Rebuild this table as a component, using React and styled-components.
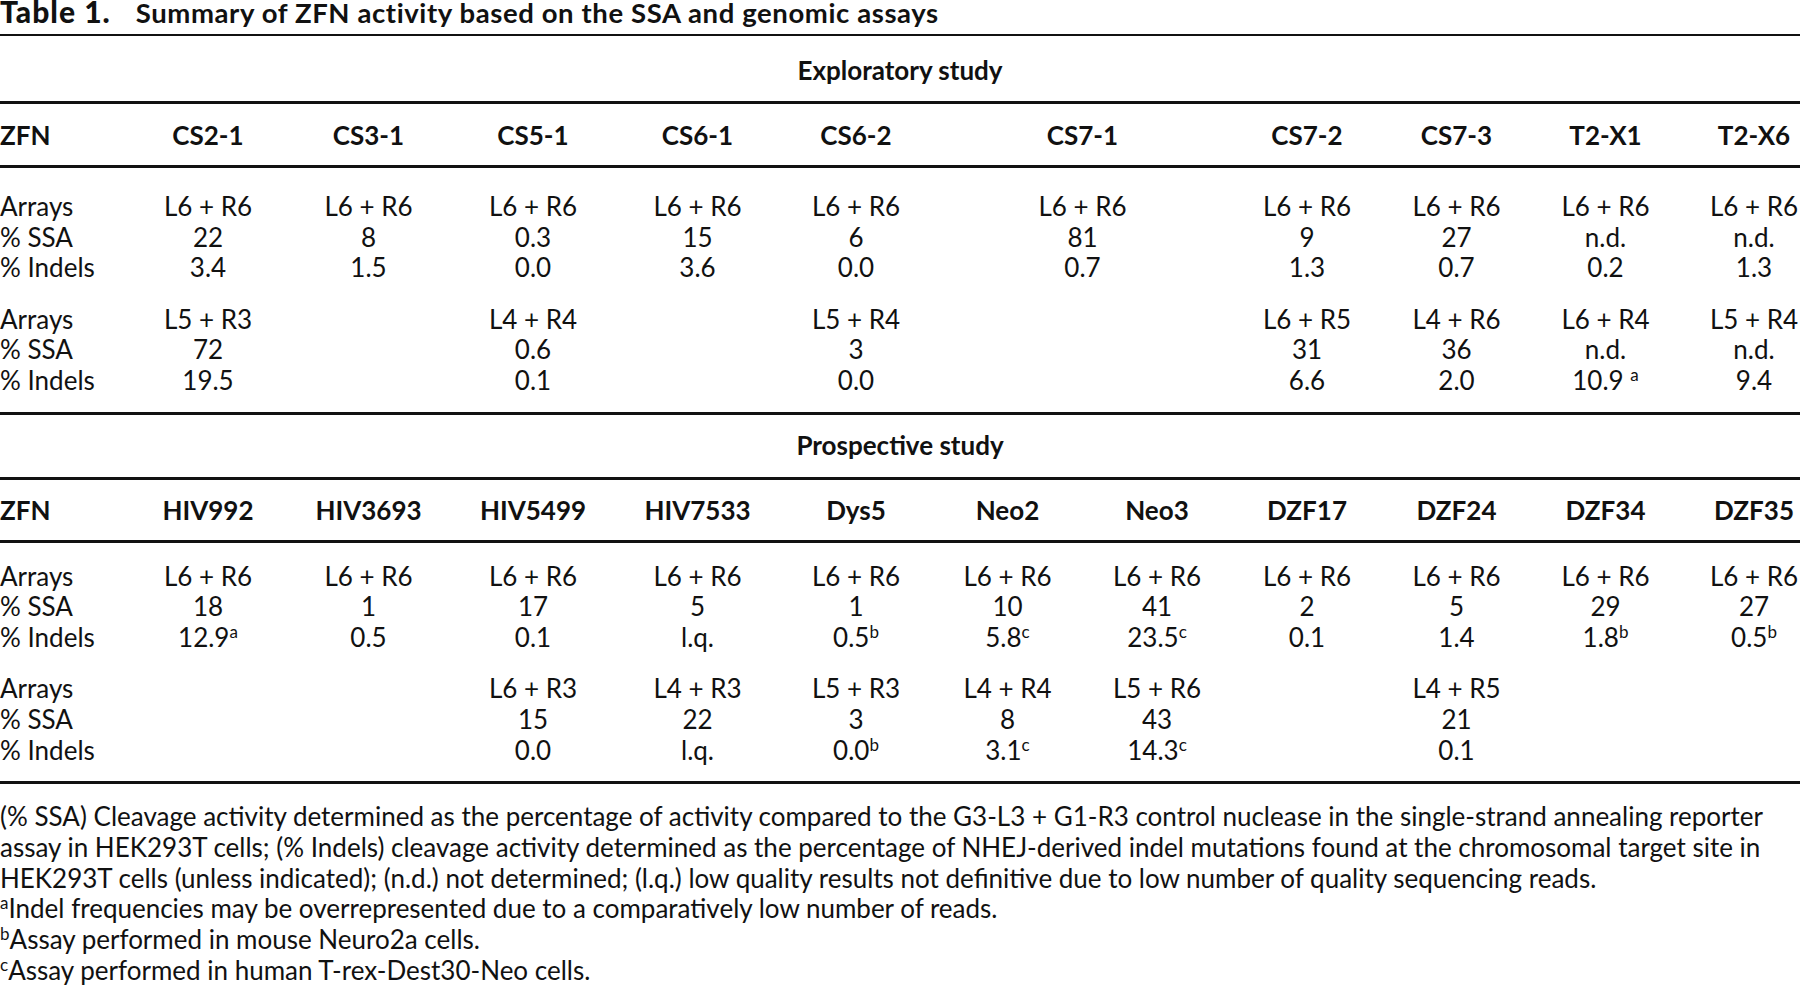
import React from "react";
import styled, { createGlobalStyle } from "styled-components";

const GlobalStyle = createGlobalStyle`
  html, body {
    margin: 0;
    padding: 0;
    background: #ffffff;
    overflow: hidden;
  }
`;

const INK = "#111111";
const COLS =
  "129px 158px 163px 166px 163px 154px 149px 150px 150px 149px 149px 148px";

const Page = styled.div`
  width: 1800px;
  height: 988px;
  overflow: hidden;
  font-family: Lato, "Open Sans", sans-serif;
  font-size: 26px;
  color: ${INK};
`;

const Caption = styled.div`
  height: 22px;
  font-size: 27.5px;
  line-height: 22px;
  letter-spacing: 0.6px;
  padding: 2px 0 10px;
  border-bottom: 2px solid ${INK};
  white-space: nowrap;
  font-weight: 700;
`;

const CaptionLabel = styled.span`
  font-size: 30px;
  line-height: 0;
  font-weight: 900;
  letter-spacing: 1px;
  margin-right: 25px;
`;

const Banner = styled.div`
  width: 1800px;
  text-align: center;
  font-weight: 700;
  line-height: 30.5px;
  padding: ${(p) => p.$top}px 0 16px;
  border-bottom: 3px solid ${INK};
`;

const Grid = styled.div`
  display: grid;
  grid-template-columns: ${COLS};
  width: max-content;
`;

const HeadRow = styled(Grid)`
  font-weight: 700;
  line-height: 30px;
  padding: 15.5px 0 15px;
  border-bottom: 3px solid ${INK};
  width: 1800px;
`;

const Block = styled(Grid)`
  line-height: 30.6px;
  padding-top: ${(p) => p.$top}px;
`;

const Section = styled.div`
  width: 1800px;
  padding-bottom: 16px;
  border-bottom: 3px solid ${INK};
`;

const Cell = styled.div`
  text-align: ${(p) => (p.$label ? "left" : "center")};
  grid-column: span ${(p) => p.$span || 1};
  white-space: nowrap;
`;

const Sup = styled.sup`
  font-size: 17px;
  line-height: 0;
  vertical-align: 9px;
`;

const Notes = styled.div`
  padding-top: 17px;
  line-height: 30.7px;
  font-size: 26px;
`;

const NoteLine = styled.div`
  white-space: nowrap;
`;

// value strings: "12.9^a" -> 12.9 with superscript a
const Value = ({ v }) => {
  if (!v) return null;
  const [main, mark] = v.split("^");
  return (
    <>
      {main}
      {mark && <Sup>{mark}</Sup>}
    </>
  );
};

const exploratory = {
  bannerTop: 18.5,
  head: ["CS2-1", "CS3-1", "CS5-1", "CS6-1", "CS6-2", "CS7-1", "CS7-2", "CS7-3", "T2-X1", "T2-X6"],
  spans: [1, 1, 1, 1, 1, 2, 1, 1, 1, 1],
  top: [23.5, 21],
  groups: [
    {
      Arrays: Array(10).fill("L6 + R6"),
      "% SSA": ["22", "8", "0.3", "15", "6", "81", "9", "27", "n.d.", "n.d."],
      "% Indels": ["3.4", "1.5", "0.0", "3.6", "0.0", "0.7", "1.3", "0.7", "0.2", "1.3"],
    },
    {
      Arrays: ["L5 + R3", "", "L4 + R4", "", "L5 + R4", "", "L6 + R5", "L4 + R6", "L6 + R4", "L5 + R4"],
      "% SSA": ["72", "", "0.6", "", "3", "", "31", "36", "n.d.", "n.d."],
      "% Indels": ["19.5", "", "0.1", "", "0.0", "", "6.6", "2.0", "10.9 ^a", "9.4"],
    },
  ],
};

const prospective = {
  bannerTop: 15.5,
  head: ["HIV992", "HIV3693", "HIV5499", "HIV7533", "Dys5", "Neo2", "Neo3", "DZF17", "DZF24", "DZF34", "DZF35"],
  spans: Array(11).fill(1),
  top: [17.5, 21],
  groups: [
    {
      Arrays: Array(11).fill("L6 + R6"),
      "% SSA": ["18", "1", "17", "5", "1", "10", "41", "2", "5", "29", "27"],
      "% Indels": ["12.9^a", "0.5", "0.1", "l.q.", "0.5^b", "5.8^c", "23.5^c", "0.1", "1.4", "1.8^b", "0.5^b"],
    },
    {
      Arrays: ["", "", "L6 + R3", "L4 + R3", "L5 + R3", "L4 + R4", "L5 + R6", "", "L4 + R5", "", ""],
      "% SSA": ["", "", "15", "22", "3", "8", "43", "", "21", "", ""],
      "% Indels": ["", "", "0.0", "l.q.", "0.0^b", "3.1^c", "14.3^c", "", "0.1", "", ""],
    },
  ],
};

const Study = ({ title, data }) => (
  <>
    <Banner $top={data.bannerTop}>{title}</Banner>
    <HeadRow>
      <Cell $label>ZFN</Cell>
      {data.head.map((h, i) => (
        <Cell key={h} $span={data.spans[i]}>
          {h}
        </Cell>
      ))}
    </HeadRow>
    <Section>
      {data.groups.map((g, gi) => (
        <Block key={gi} $top={data.top[gi]}>
          {Object.entries(g).map(([label, vals]) => (
            <React.Fragment key={label}>
              <Cell $label>{label}</Cell>
              {vals.map((v, i) => (
                <Cell key={i} $span={data.spans[i]}>
                  <Value v={v} />
                </Cell>
              ))}
            </React.Fragment>
          ))}
        </Block>
      ))}
    </Section>
  </>
);

const App = () => (
  <Page>
    <GlobalStyle />
    <Caption>
      <CaptionLabel>Table 1.</CaptionLabel>
      Summary of ZFN activity based on the SSA and genomic assays
    </Caption>
    <Study title="Exploratory study" data={exploratory} />
    <Study title="Prospective study" data={prospective} />
    <Notes>
      <NoteLine>
        (% SSA) Cleavage activity determined as the percentage of activity compared to the G3-L3 + G1-R3 control nuclease in the single-strand annealing reporter
      </NoteLine>
      <NoteLine>
        assay in HEK293T cells; (% Indels) cleavage activity determined as the percentage of NHEJ-derived indel mutations found at the chromosomal target site in
      </NoteLine>
      <NoteLine>
        HEK293T cells (unless indicated); (n.d.) not determined; (l.q.) low quality results not definitive due to low number of quality sequencing reads.
      </NoteLine>
      <NoteLine>
        <Sup>a</Sup>Indel frequencies may be overrepresented due to a comparatively low number of reads.
      </NoteLine>
      <NoteLine>
        <Sup>b</Sup>Assay performed in mouse Neuro2a cells.
      </NoteLine>
      <NoteLine>
        <Sup>c</Sup>Assay performed in human T-rex-Dest30-Neo cells.
      </NoteLine>
    </Notes>
  </Page>
);

export default App;
